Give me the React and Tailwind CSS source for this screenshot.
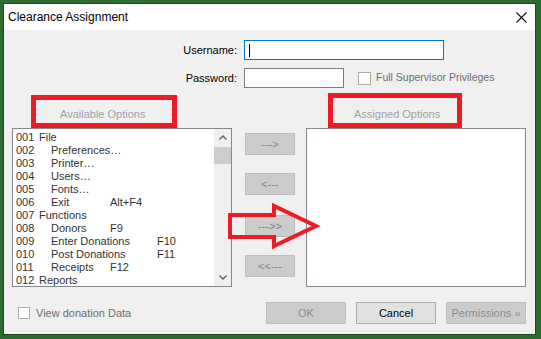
import React from 'react';

const items = [
  { no: '001', name: 'File', top: true },
  { no: '002', name: 'Preferences…' },
  { no: '003', name: 'Printer…' },
  { no: '004', name: 'Users…' },
  { no: '005', name: 'Fonts…' },
  { no: '006', name: 'Exit', key: 'Alt+F4', wide: false },
  { no: '007', name: 'Functions', top: true },
  { no: '008', name: 'Donors', key: 'F9', wide: false },
  { no: '009', name: 'Enter Donations', key: 'F10', wide: true },
  { no: '010', name: 'Post Donations', key: 'F11', wide: true },
  { no: '011', name: 'Receipts', key: 'F12', wide: false },
  { no: '012', name: 'Reports', top: true },
];

const Chevron = ({ down }) => (
  <svg width="8" height="5" viewBox="0 0 8 5" className={down ? 'rotate-180' : ''}>
    <polyline points="0.5,4.5 4,1 7.5,4.5" fill="none" stroke="#606060" strokeWidth="1.4" />
  </svg>
);

const MoveButton = ({ label, className }) => (
  <div className={`w-[50px] h-[22px] bg-[#cccccc] border border-[#bfbfbf] flex items-center justify-center text-[11px] text-[#838383] ${className}`}>
    {label}
  </div>
);

const App = () => {
  return (
    <div className="relative w-[541px] h-[339px] bg-[#2e6b2e] pt-[3px] pl-[3px] font-['Liberation_Sans',Arial,sans-serif] text-[11px] overflow-hidden">
      <div className="w-[533px] h-[332px] border border-[#1d4a1d] bg-[#f0f0f0] flex flex-col">

        {/* title bar */}
        <div className="h-[26px] bg-white flex items-center justify-between pl-[4px] pr-[8px]">
          <span className="text-[12px] text-black">Clearance Assignment</span>
          <svg width="11" height="11" viewBox="0 0 11 11">
            <path d="M0.5 0.5 L10.5 10.5 M10.5 0.5 L0.5 10.5" stroke="#111" strokeWidth="1.1" />
          </svg>
        </div>

        {/* username */}
        <div className="mt-[10px] h-[20px] flex items-center">
          <span className="w-[233px] text-right text-black">Username:</span>
          <div className="ml-[7px] w-[200px] h-[20px] bg-white border border-[#0078d7] flex items-center pl-[4px]">
            <span className="w-px h-[13px] bg-black" />
          </div>
        </div>

        {/* password */}
        <div className="mt-[8px] h-[20px] flex items-center">
          <span className="w-[233px] text-right text-black">Password:</span>
          <div className="ml-[7px] w-[100px] h-[20px] bg-white border border-[#7a7a7a]" />
          <div className="ml-[14px] w-[13px] h-[13px] bg-white border border-[#adadad]" />
          <span className="ml-[5px] text-[10.5px] text-[#6d6d6d]">Full Supervisor Privileges</span>
        </div>

        {/* captions */}
        <div className="mt-[18px] h-[16px] flex items-center text-[#a0a0a0]">
          <div className="w-[350px] pl-[56px]">Available Options</div>
          <div>Assigned Options</div>
        </div>

        {/* lists */}
        <div className="mt-[6px] h-[159px] flex items-start pl-[8px]">
          <div className="w-[220px] h-[159px] border border-[#828790] bg-white flex">
            <div className="flex-1 pl-[3px] pt-[2px] text-[#333]">
              {items.map((it) => (
                <div key={it.no} className="h-[13px] leading-[13px] flex whitespace-nowrap">
                  <span className={it.top ? 'w-[23px]' : 'w-[35px]'}>{it.no}</span>
                  <span className={it.key ? (it.wide ? 'w-[106px]' : 'w-[59px]') : ''}>{it.name}</span>
                  {it.key && <span>{it.key}</span>}
                </div>
              ))}
            </div>
            <div className="w-[17px] h-full bg-[#f0f0f0] flex flex-col">
              <div className="h-[17px] flex items-center justify-center"><Chevron /></div>
              <div className="mt-px h-[17px] bg-[#cdcdcd]" />
              <div className="flex-1" />
              <div className="h-[17px] flex items-center justify-center"><Chevron down /></div>
            </div>
          </div>

          <div className="ml-[13px] flex flex-col">
            <MoveButton label="--->" className="mt-[5px]" />
            <MoveButton label="<---" className="mt-[18px]" />
            <MoveButton label="--->>" className="mt-[20px]" />
            <MoveButton label="<<---" className="mt-[18px]" />
          </div>

          <div className="ml-[11px] w-[220px] h-[159px] border border-[#828790] bg-white" />
        </div>

        {/* bottom */}
        <div className="mt-[15px] h-[22px] flex items-center pl-[14px] pr-[9px]">
          <div className="w-[12px] h-[12px] bg-white border border-[#adadad]" />
          <span className="ml-[6px] text-[#6d6d6d]">View donation Data</span>
          <div className="ml-auto flex gap-[10px]">
            <div className="w-[80px] h-[22px] bg-[#cccccc] border border-[#bfbfbf] flex items-center justify-center text-[#8d8d8d]">OK</div>
            <div className="w-[80px] h-[22px] bg-[#e1e1e1] border border-[#adadad] flex items-center justify-center text-black">Cancel</div>
            <div className="w-[80px] h-[22px] bg-[#cccccc] border border-[#bfbfbf] flex items-center justify-center text-[#8d8d8d]">Permissions »</div>
          </div>
        </div>
      </div>

      {/* annotations */}
      <div className="absolute left-[31px] top-[95px] w-[146px] h-[33px] border-[5px] border-[#ed1c24]" />
      <div className="absolute left-[328px] top-[93px] w-[134px] h-[35px] border-[5px] border-[#ed1c24]" />
      <svg className="absolute left-0 top-0 pointer-events-none" width="541" height="339">
        <polygon
          points="230,215 274,215 274,206 316,226 274,246 274,237 230,237"
          fill="none"
          stroke="#ed1c24"
          strokeWidth="4"
        />
      </svg>
    </div>
  );
};

export default App;
